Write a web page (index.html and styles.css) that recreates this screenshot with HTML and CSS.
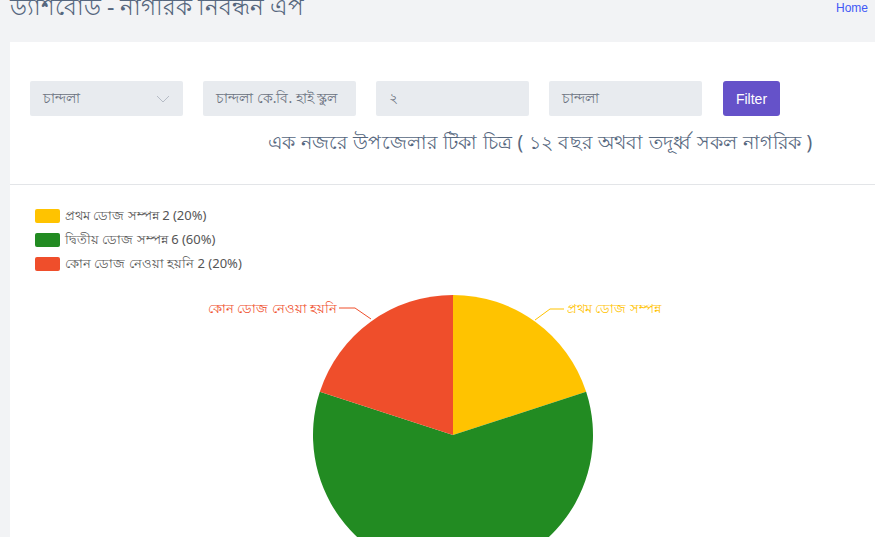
FILE: index.html
```html
<!DOCTYPE html>
<html lang="bn">
<head>
<meta charset="utf-8">
<title>ড্যাশবোর্ড</title>
<link rel="stylesheet" href="styles.css">
</head>
<body>
<header class="topbar">
  <h1 class="page-title">ড্যাশবোর্ড - নাগরিক নিবন্ধন এপ</h1>
  <a class="home-link" href="#">Home</a>
</header>
<main class="card">
  <div class="filters">
    <div class="field select">
      <span>চান্দলা</span>
      <svg class="chev" width="14" height="8" viewBox="0 0 14 8"><path d="M1 1l6 6 6-6" fill="none" stroke="#b6bcc6" stroke-width="1"/></svg>
    </div>
    <div class="field"><span>চান্দলা কে.বি. হাই স্কুল</span></div>
    <div class="field"><span>২</span></div>
    <div class="field"><span>চান্দলা</span></div>
    <button class="btn">Filter</button>
  </div>
  <h2 class="chart-title">এক নজরে উপজেলার টিকা চিত্র ( ১২ বছর অথবা তদূর্ধ্ব সকল নাগরিক )</h2>
  <hr class="divider">
  <ul class="legend">
    <li><span class="swatch yellow"></span>প্রথম ডোজ সম্পন্ন 2 (20%)</li>
    <li><span class="swatch green"></span>দ্বিতীয় ডোজ সম্পন্ন 6 (60%)</li>
    <li><span class="swatch red"></span>কোন ডোজ নেওয়া হয়নি 2 (20%)</li>
  </ul>
  <svg class="pie" width="865" height="260" viewBox="0 0 865 260">
    <path d="M443 150 L443 10 A140 140 0 0 1 576.15 106.74 Z" fill="#ffc300"/>
    <path d="M443 150 L576.15 106.74 A140 140 0 1 1 309.85 106.74 Z" fill="#228b22"/>
    <path d="M443 150 L309.85 106.74 A140 140 0 0 1 443 10 Z" fill="#ef4e2b"/>
    <polyline points="361,34 345,23 329,23" fill="none" stroke="#ef4e2b" stroke-width="1"/>
    <text x="327" y="28" text-anchor="end" class="pie-label red-t">কোন ডোজ নেওয়া হয়নি</text>
    <polyline points="525,35 540,24 554,24" fill="none" stroke="#ffc300" stroke-width="1"/>
    <text x="557" y="28" class="pie-label yellow-t">প্রথম ডোজ সম্পন্ন</text>
  </svg>
</main>
</body>
</html>
```
FILE: styles.css
```css
* { box-sizing: border-box; }
html, body { margin: 0; padding: 0; overflow: hidden; }
body {
  background: #f2f3f5;
  font-family: "Noto Sans", "DejaVu Sans", sans-serif;
  width: 875px;
  height: 537px;
}
.topbar {
  height: 42px;
  display: flex;
  justify-content: space-between;
  align-items: flex-start;
  padding: 0 7px 0 10px;
}
.page-title {
  margin: -10px 0 0;
  font-size: 23px;
  font-weight: 400;
  color: #56677e;
  line-height: 32px;
}
.home-link {
  margin-top: 0;
  font-family: "Liberation Sans", Arial, sans-serif;
  font-size: 12px;
  line-height: 16px;
  color: #4158f5;
  text-decoration: none;
}
.card {
  margin-left: 10px;
  background: #fff;
  height: 495px;
  overflow: hidden;
}
.filters {
  display: flex;
  gap: 20px;
  padding: 39px 20px 0;
}
.field {
  width: 153px;
  height: 35px;
  background: #e8ebef;
  border-radius: 2px;
  display: flex;
  align-items: center;
  justify-content: space-between;
  padding: 0 13px;
  font-size: 14px;
  color: #6b7280;
  white-space: nowrap;
  overflow: hidden;
}
.btn {
  width: 57px;
  height: 35px;
  border: 0;
  border-radius: 3px;
  background: #6552c9;
  color: #fff;
  font-family: "Liberation Sans", Arial, sans-serif;
  font-size: 14px;
  margin-left: 1px;
}
.chart-title {
  margin: 11px 0 0;
  padding-left: 258px;
  font-size: 19px;
  letter-spacing: 0.3px;
  font-weight: 400;
  color: #56677e;
  line-height: 30px;
}
.divider {
  border: 0;
  border-top: 1px solid #e3e5e8;
  margin: 27px 0 0;
}
.legend {
  list-style: none;
  margin: 0;
  padding: 19px 0 0 25px;
}
.legend li {
  display: flex;
  align-items: center;
  gap: 5px;
  height: 24px;
  font-size: 13px;
  color: #555;
}
.swatch {
  width: 25px;
  height: 14px;
  border-radius: 2px;
}
.yellow { background: #ffc300; }
.green { background: #228b22; }
.red { background: #ef4e2b; }
.pie { display: block; margin-top: 9px; flex-shrink: 0; }
.pie-label { font-size: 13px; font-family: "Noto Sans", sans-serif; }
.red-t { fill: #ef4e2b; }
.yellow-t { fill: #ffc300; }
```
